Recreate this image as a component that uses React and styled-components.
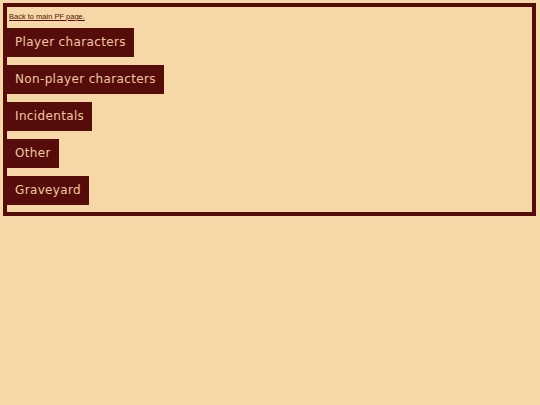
import React from "react";
import styled, { createGlobalStyle } from "styled-components";

const maroon = "#560c0b";
const cream = "#f6d8a8";
const peach = "#eec7a2";

const GlobalStyle = createGlobalStyle`
  html, body {
    margin: 0;
    padding: 0;
    background: ${cream};
  }
  body {
    font-family: "DejaVu Sans", "Liberation Sans", sans-serif;
  }
`;

const Frame = styled.div`
  margin: 3px 4px 0 3px;
  border: 4px solid ${maroon};
  padding: 0 0 7px 0;
  display: flex;
  flex-direction: column;
  align-items: flex-start;
  gap: 8px;
`;

const BackLink = styled.a`
  display: block;
  margin: 6px 0 0 2px;
  font-family: "Liberation Sans", Arial, sans-serif;
  font-size: 7.5px;
  line-height: 7px;
  color: ${maroon};
  text-decoration: underline;
`;

const MenuButton = styled.a`
  display: block;
  height: 29px;
  box-sizing: border-box;
  padding: 0 8px;
  background: ${maroon};
  color: ${peach};
  font-size: 12px;
  letter-spacing: 0.35px;
  line-height: 29px;
  text-decoration: none;
  white-space: nowrap;
`;

const sections = [
  "Player characters",
  "Non-player characters",
  "Incidentals",
  "Other",
  "Graveyard",
];

export default function App() {
  return (
    <>
      <GlobalStyle />
      <Frame>
        <BackLink href="#">Back to main PF page.</BackLink>
        {sections.map(name => (
          <MenuButton key={name} href="#">
            {name}
          </MenuButton>
        ))}
      </Frame>
    </>
  );
}
